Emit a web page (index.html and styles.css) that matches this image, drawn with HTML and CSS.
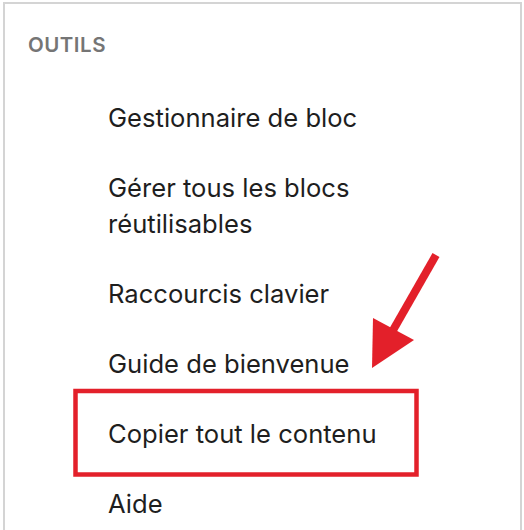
FILE: index.html
```html
<!DOCTYPE html>
<html lang="fr">
<head>
<meta charset="utf-8">
<title>Outils</title>
<link rel="stylesheet" href="styles.css">
</head>
<body>
<div class="panel">
  <h2 class="panel-title">Outils</h2>
  <ul class="menu">
    <li class="menu-item">Gestionnaire de bloc</li>
    <li class="menu-item">Gérer tous les blocs<br>réutilisables</li>
    <li class="menu-item">Raccourcis clavier</li>
    <li class="menu-item">Guide de bienvenue</li>
    <li class="menu-item">Copier tout le contenu</li>
    <li class="menu-item">Aide</li>
  </ul>
</div>
<svg class="annotation" width="524" height="530" viewBox="0 0 524 530" aria-hidden="true">
  <rect x="75.5" y="391" width="341" height="83.5" fill="none" stroke="#e3202a" stroke-width="4.5"/>
  <line x1="436" y1="255" x2="392" y2="332" stroke="#e3202a" stroke-width="8"/>
  <polygon points="372,368 373,318 414,340" fill="#e3202a"/>
</svg>
</body>
</html>
```
FILE: styles.css
```css
html, body {
  margin: 0;
  padding: 0;
  background: #ffffff;
}
body {
  width: 524px;
  height: 530px;
  overflow: hidden;
  font-family: "Inter", "Liberation Sans", sans-serif;
  color: #1e1e1e;
}
.panel {
  box-sizing: border-box;
  margin: 2px 2px 0 3px;
  height: 528px;
  border: 2px solid #d4d4d4;
  border-bottom: none;
  padding: 28.5px 0 0 23px;
}
.panel-title {
  margin: 0;
  font-size: 20.5px;
  line-height: 24px;
  font-weight: 600;
  text-transform: uppercase;
  color: #757575;
  letter-spacing: 0.5px;
}
.menu {
  list-style: none;
  margin: 26.5px 0 0 0;
  padding: 0 0 0 80px;
}
.menu-item {
  font-size: 25.6px;
  line-height: 36px;
  padding: 17px 0 17px;
  color: #1e1e1e;
}
.annotation {
  position: absolute;
  left: 0;
  top: 0;
  pointer-events: none;
}
```
